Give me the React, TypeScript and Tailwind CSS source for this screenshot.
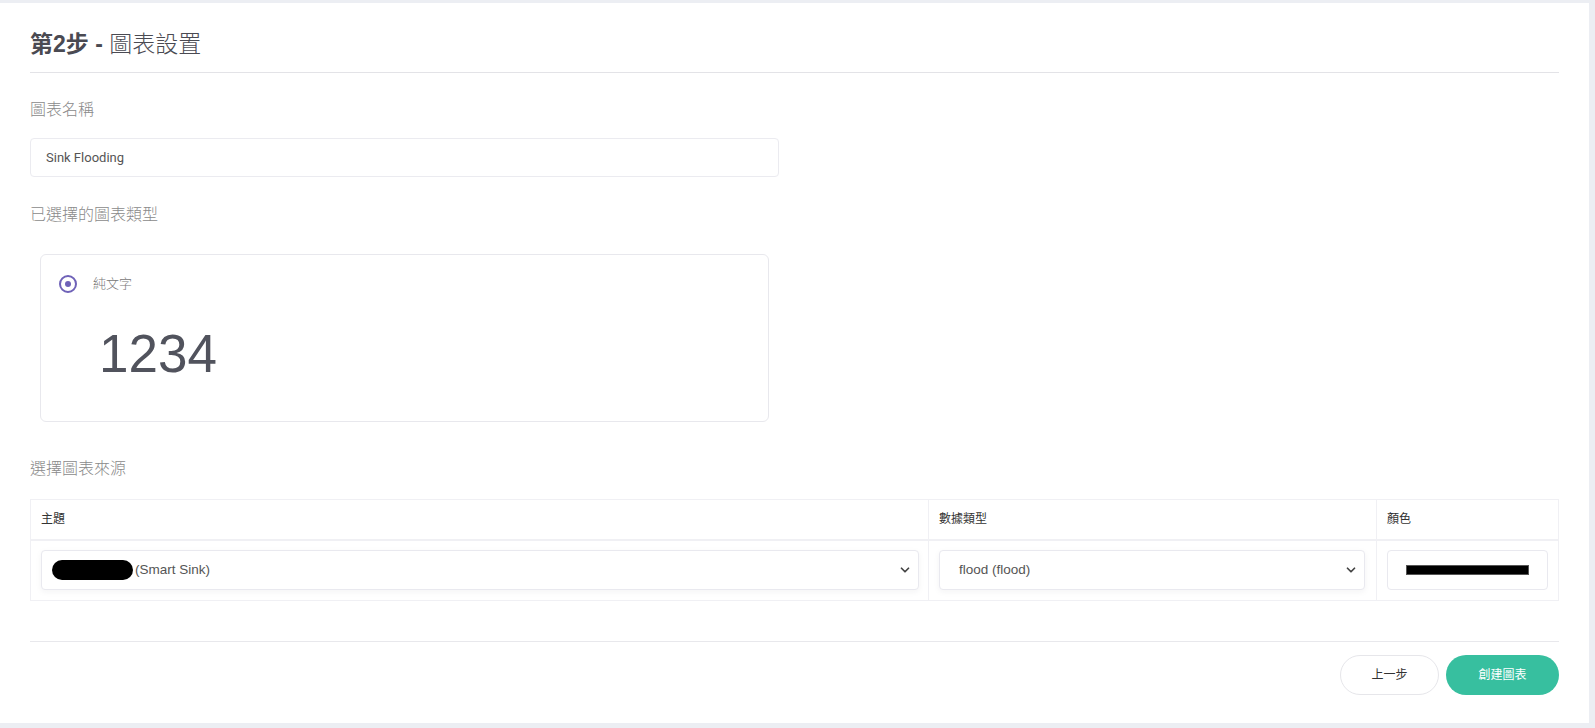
import React from "react";
import { ChevronDown } from "lucide-react";

const font = "font-['Liberation_Sans','Noto_Sans_CJK_TC',sans-serif]";

function FakeSelect({ children }: { children: React.ReactNode }) {
  return (
    <div className="relative flex items-center h-[40px] rounded-[4px] border border-[#e9e9ef] bg-white shadow-[0_2px_6px_rgba(30,30,60,0.05)] px-[10px] text-[13.5px] text-[#555]">
      {children}
      <ChevronDown
        size={14}
        strokeWidth={3}
        className="absolute right-[6px] top-1/2 -translate-y-1/2 text-[#444]"
      />
    </div>
  );
}

export default function App() {
  return (
    <div className={`${font} min-h-screen bg-[#eceef3] pt-[3px] pr-[6px] pb-[5px]`}>
      <div className="bg-white h-[720px] px-[30px] pt-[26px]">
        {/* Header */}
        <h2 className="text-[23px] leading-[30px] text-[#4a4a52]">
          <span className="font-bold">第2步 -</span> <span className="font-light">圖表設置</span>
        </h2>
        <div className="mt-[13px] border-t border-[#e3e3e7]" />

        {/* Chart name */}
        <div className="mt-[25px] text-[16px] leading-[24px] font-light text-[#8a8a8a]">圖表名稱</div>
        <div className="mt-[16px] w-[749px] h-[39px] rounded-[4px] border border-[#ebebf0] flex items-center px-[15px] text-[13px] text-[#555] font-['Roboto','Noto_Sans_CJK_TC',sans-serif]">
          Sink Flooding
        </div>

        {/* Selected chart type */}
        <div className="mt-[26px] text-[16px] leading-[24px] font-light text-[#8a8a8a]">已選擇的圖表類型</div>
        <div className="mt-[27px] ml-[10px] w-[729px] h-[168px] rounded-[6px] border border-[#e8e8ed] px-[18px] pt-[19px]">
          <div className="flex items-center gap-[16px]">
            <span className="w-[18px] h-[18px] rounded-full border-2 border-[#6f62b8] flex items-center justify-center">
              <span className="w-[6px] h-[6px] rounded-full bg-[#6f62b8]" />
            </span>
            <span className="text-[13px] font-light text-[#777]">純文字</span>
          </div>
          <div className="mt-[30px] ml-[40px] text-[53px] leading-[60px] text-[#51535d]">1234</div>
        </div>

        {/* Source */}
        <div className="mt-[35px] text-[16px] leading-[24px] font-light text-[#8a8a8a]">選擇圖表來源</div>
        <table className="mt-[18px] w-full border-collapse text-left">
          <thead>
            <tr className="h-[40px] text-[12px] text-[#333]">
              <th className="w-[898px] font-normal border border-[#f0f0f4] border-b-2 px-[10px]">主題</th>
              <th className="w-[448px] font-normal border border-[#f0f0f4] border-b-2 px-[10px]">數據類型</th>
              <th className="font-normal border border-[#f0f0f4] border-b-2 px-[10px]">顏色</th>
            </tr>
          </thead>
          <tbody>
            <tr className="h-[61px]">
              <td className="border border-[#f0f0f4] pl-[10px] pr-[9px]">
                <FakeSelect>
                  <span className="inline-block w-[81px] h-[20px] rounded-full bg-black" />
                  <span className="ml-[2px]">(Smart Sink)</span>
                </FakeSelect>
              </td>
              <td className="border border-[#f0f0f4] pl-[10px] pr-[11px]">
                <FakeSelect>
                  <span className="ml-[9px]">flood (flood)</span>
                </FakeSelect>
              </td>
              <td className="border border-[#f0f0f4] pl-[10px] pr-[10px]">
                <div className="h-[40px] rounded-[4px] border border-[#e9e9ef] flex items-center px-[18px]">
                  <div className="h-[10px] w-full bg-black border border-[#555]" />
                </div>
              </td>
            </tr>
          </tbody>
        </table>

        <div className="mt-[40px] border-t border-[#e8e8ec]" />

        {/* Footer buttons */}
        <div className="mt-[13px] flex justify-end gap-[7px]">
          <button className="w-[99px] h-[40px] rounded-full border border-[#e6e6ea] bg-white text-[12px] text-[#333]">
            上一步
          </button>
          <button className="w-[113px] h-[40px] rounded-full bg-[#37bf9f] text-[12px] text-white">
            創建圖表
          </button>
        </div>
      </div>
    </div>
  );
}
